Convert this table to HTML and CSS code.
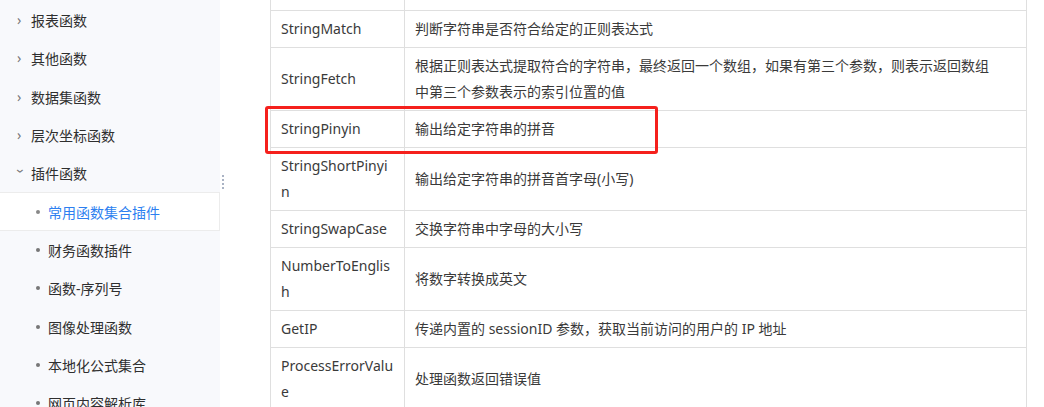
FILE: index.html
```html
<!DOCTYPE html>
<html lang="zh-CN">
<head>
  <meta charset="UTF-8">
  <meta name="viewport" content="width=device-width, initial-scale=1.0">
  <link rel="stylesheet" href="styles.css">
  <title>插件函数</title>
</head>
<body>
  <div class="page">
    <div class="sidebar">
      <ul class="menu">
        <li class="item"><span class="arrow">›</span>报表函数</li>
        <li class="item"><span class="arrow">›</span>其他函数</li>
        <li class="item"><span class="arrow">›</span>数据集函数</li>
        <li class="item"><span class="arrow">›</span>层次坐标函数</li>
        <li class="item"><span class="arrow open">›</span>插件函数</li>
        <li class="item sub active"><span class="dot"></span>常用函数集合插件</li>
        <li class="item sub"><span class="dot"></span>财务函数插件</li>
        <li class="item sub"><span class="dot"></span>函数-序列号</li>
        <li class="item sub"><span class="dot"></span>图像处理函数</li>
        <li class="item sub"><span class="dot"></span>本地化公式集合</li>
        <li class="item sub"><span class="dot"></span>网页内容解析库</li>
      </ul>
      <div class="handle">
        <i></i><i></i><i></i><i></i>
      </div>
    </div>

    <div class="content">
      <table class="doc-table">
        <tr class="row-lead"><td></td><td></td></tr>
        <tr><td>StringMatch</td><td>判断字符串是否符合给定的正则表达式</td></tr>
        <tr><td>StringFetch</td><td>根据正则表达式提取符合的字符串，最终返回一个数组，如果有第三个参数，则表示返回数组中第三个参数表示的索引位置的值</td></tr>
        <tr><td>StringPinyin</td><td>输出给定字符串的拼音</td></tr>
        <tr><td>StringShortPinyin</td><td>输出给定字符串的拼音首字母(小写)</td></tr>
        <tr><td>StringSwapCase</td><td>交换字符串中字母的大小写</td></tr>
        <tr><td>NumberToEnglish</td><td>将数字转换成英文</td></tr>
        <tr><td>GetIP</td><td>传递内置的 sessionID 参数，获取当前访问的用户的 IP 地址</td></tr>
        <tr><td>ProcessErrorValue</td><td>处理函数返回错误值</td></tr>
      </table>
      <div class="mark"></div>
    </div>
  </div>
</body>
</html>
```

FILE: styles.css
```css
* {
  margin: 0;
  padding: 0;
  box-sizing: border-box;
}

body {
  font-family: "Noto Sans", "Noto Sans CJK SC", sans-serif;
  font-size: 14px;
  color: #333;
  background-color: #fff;
  overflow: hidden;
}

.page {
  display: flex;
  height: 407px;
}

.sidebar {
  position: relative;
  width: 220px;
  flex-shrink: 0;
  background-color: #f8f9fc;
}

.menu {
  list-style: none;
  padding-top: 1px;
}

.item {
  display: flex;
  align-items: center;
  height: 38.3px;
  padding-left: 17px;
  color: #2f2f2f;
  white-space: nowrap;
}

.arrow {
  display: inline-block;
  width: 14px;
  font-size: 14px;
  color: #777;
  line-height: 1;
}

.arrow.open {
  transform: rotate(90deg);
  width: 8px;
  margin-right: 6px;
  margin-left: 0;
}

.sub {
  padding-left: 36px;
}

.dot {
  width: 4px;
  height: 4px;
  border-radius: 50%;
  background-color: #777;
  margin-right: 8px;
}

.active {
  background-color: #fff;
  border-top: 1px solid #ececec;
  border-bottom: 1px solid #ececec;
  border-right: 1px solid #ececec;
  color: #2d7ff0;
}

.active .dot {
  background-color: #888;
}

.handle {
  position: absolute;
  left: 222px;
  top: 175px;
  display: flex;
  flex-direction: column;
  gap: 2px;
}

.handle i {
  width: 2px;
  height: 2px;
  background-color: #aab3c4;
}

.content {
  position: relative;
  flex: 1;
  padding-left: 50px;
}

.doc-table {
  width: 757px;
  margin-top: -27px;
  border-collapse: collapse;
  table-layout: fixed;
}

.doc-table td {
  border: 1px solid #dfdfdf;
  padding: 5px 10px;
  line-height: 26px;
  vertical-align: middle;
  word-break: break-all;
  color: #3a3a3a;
}

.doc-table td:first-child {
  width: 134px;
}

.doc-table td:last-child {
  padding-right: 28px;
}

.row-lead td {
  height: 37px;
}

.mark {
  position: absolute;
  left: 45px;
  top: 106px;
  width: 393px;
  height: 48px;
  border: 3px solid #f5201c;
  border-radius: 3px;
}
```
